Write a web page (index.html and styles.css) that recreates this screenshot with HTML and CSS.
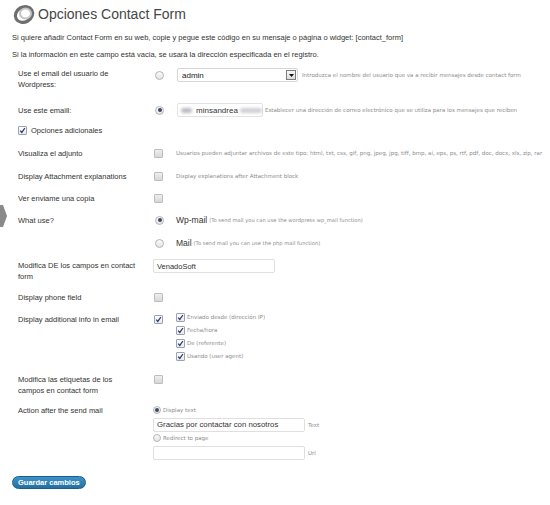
FILE: index.html
```html
<!DOCTYPE html>
<html lang="es">
<head>
<meta charset="utf-8">
<title>Opciones Contact Form</title>
<link rel="stylesheet" href="styles.css">
</head>
<body>
<svg class="menu-arrow" width="7" height="22" viewBox="0 0 7 22"><polygon points="0,0 3,0 7,11 3,22 0,22" fill="#8a8a8a"/></svg>
<div class="wrap">
  <div class="head">
    <svg class="logo" width="24" height="22" viewBox="0 0 24 22">
      <ellipse cx="12" cy="11.5" rx="9" ry="7.5" fill="none" stroke="#6e6e6e" stroke-width="3.2" transform="rotate(-30 12 11.5)"/>
      <ellipse cx="13.5" cy="10.5" rx="5.5" ry="5" fill="none" stroke="#c4c4c4" stroke-width="2"/>
      <ellipse cx="13.5" cy="10.5" rx="3" ry="2.6" fill="#fff"/>
    </svg>
    <h2 class="title">Opciones Contact Form</h2>
  </div>
  <p class="intro">Si quiere añadir Contact Form en su web, copie y pegue este código en su mensaje o página o widget: [contact_form]</p>
  <p class="intro intro2">Si la información en este campo está vacia, se usará la dirección especificada en el registro.</p>

  <div class="form">
    <div class="row mb15">
      <div class="lbl">Use el email del usuario de Wordpress:</div>
      <div class="ctl shift">
        <span class="radio"></span>
        <span class="select"><span class="sv">admin</span><span class="sbtn"><svg width="5" height="3" viewBox="0 0 5 3"><polygon points="0,0 5,0 2.5,3" fill="#111"/></svg></span></span>
        <span class="desc">Introduzca el nombre del usuario que va a recibir mensajes desde contact form</span>
      </div>
    </div>

    <div class="row mb9">
      <div class="lbl">Use este emaill:</div>
      <div class="ctl">
        <span class="radio on"></span>
        <span class="email"><span class="blur b1"></span><span class="ev">minsandrea</span><span class="blur b2"></span></span>
        <span class="desc d2">Establecer una dirección de correo electrónico que se utiliza para los mensajes que reciben</span>
      </div>
    </div>

    <div class="extra mb12">
      <span class="check on"><svg width="7" height="7" viewBox="0 0 7 7"><path d="M1.2 3.6 L2.8 5.4 L5.9 1" fill="none" stroke="#2b3f6b" stroke-width="1.3"/></svg></span>
      <span class="extra-t">Opciones adicionales</span>
    </div>

    <div class="row mb12">
      <div class="lbl">Visualiza el adjunto</div>
      <div class="ctl">
        <span class="check"></span>
        <span class="desc d3">Usuarios pueden adjuntar archivos de este tipo: html, txt, css, gif, png, jpeg, jpg, tiff, bmp, ai, eps, ps, rtf, pdf, doc, docx, xls, zip, rar</span>
      </div>
    </div>

    <div class="row mb11">
      <div class="lbl">Display Attachment explanations</div>
      <div class="ctl">
        <span class="check"></span>
        <span class="desc d3">Display explanations after Attachment block</span>
      </div>
    </div>

    <div class="row mb11">
      <div class="lbl">Ver enviame una copia</div>
      <div class="ctl">
        <span class="check"></span>
      </div>
    </div>

    <div class="row mb12">
      <div class="lbl">What use?</div>
      <div class="ctl">
        <span class="radio on"></span>
        <span class="opt">Wp-mail</span>
        <span class="desc d4">(To send mail you can use the wordpress wp_mail function)</span>
      </div>
    </div>

    <div class="row mb11">
      <div class="lbl"></div>
      <div class="ctl">
        <span class="radio"></span>
        <span class="opt">Mail</span>
        <span class="desc d4">(To send mail you can use the php mail function)</span>
      </div>
    </div>

    <div class="row mb10">
      <div class="lbl">Modifica DE los campos en contact form</div>
      <div class="ctl">
        <span class="field f1">VenadoSoft</span>
      </div>
    </div>

    <div class="row mb11">
      <div class="lbl">Display phone field</div>
      <div class="ctl">
        <span class="check"></span>
      </div>
    </div>

    <div class="row mb11">
      <div class="lbl">Display additional info in email</div>
      <div class="ctl multi">
        <span class="check on main"><svg width="7" height="7" viewBox="0 0 7 7"><path d="M1.2 3.6 L2.8 5.4 L5.9 1" fill="none" stroke="#2b3f6b" stroke-width="1.3"/></svg></span>
        <div class="subs">
          <div class="sub"><span class="check on"><svg width="7" height="7" viewBox="0 0 7 7"><path d="M1.2 3.6 L2.8 5.4 L5.9 1" fill="none" stroke="#2b3f6b" stroke-width="1.3"/></svg></span><span class="desc">Enviado desde (dirección IP)</span></div>
          <div class="sub"><span class="check on"><svg width="7" height="7" viewBox="0 0 7 7"><path d="M1.2 3.6 L2.8 5.4 L5.9 1" fill="none" stroke="#2b3f6b" stroke-width="1.3"/></svg></span><span class="desc">Fecha/hora</span></div>
          <div class="sub"><span class="check on"><svg width="7" height="7" viewBox="0 0 7 7"><path d="M1.2 3.6 L2.8 5.4 L5.9 1" fill="none" stroke="#2b3f6b" stroke-width="1.3"/></svg></span><span class="desc">De (referente)</span></div>
          <div class="sub"><span class="check on"><svg width="7" height="7" viewBox="0 0 7 7"><path d="M1.2 3.6 L2.8 5.4 L5.9 1" fill="none" stroke="#2b3f6b" stroke-width="1.3"/></svg></span><span class="desc">Usando (user agent)</span></div>
        </div>
      </div>
    </div>

    <div class="row mb9">
      <div class="lbl">Modifica las etiquetas de los campos en contact form</div>
      <div class="ctl">
        <span class="check"></span>
      </div>
    </div>

    <div class="row">
      <div class="lbl">Action after the send mail</div>
      <div class="ctl stack">
        <div class="line"><span class="radio sm on"></span><span class="desc">Display text</span></div>
        <div class="line in"><span class="field f2">Gracias por contactar con nosotros</span><span class="desc">Text</span></div>
        <div class="line"><span class="radio sm"></span><span class="desc">Redirect to page</span></div>
        <div class="line in"><span class="field f2"></span><span class="desc">Url</span></div>
      </div>
    </div>
  </div>

  <button class="save">Guardar cambios</button>
</div>
</body>
</html>
```

FILE: styles.css
```css
html, body {
  margin: 0;
  padding: 0;
  overflow: hidden;
  background: #fff;
}
body {
  font-family: "Liberation Sans", Arial, sans-serif;
  color: #333;
  font-size: 7.5px;
  position: relative;
  width: 550px;
  height: 505px;
}
.menu-arrow {
  position: absolute;
  left: 0;
  top: 205px;
}
.wrap {
  padding-left: 12px;
}
.head {
  display: flex;
  align-items: center;
  height: 26px;
  padding-top: 1px;
}
.logo {
  margin-right: 2px;
}
.title {
  margin: 0;
  font-weight: normal;
  font-size: 14px;
  color: #464646;
  line-height: 20px;
}
.intro {
  margin: 4.5px 0 0;
  line-height: 11px;
  font-size: 7.5px;
  color: #333;
  white-space: nowrap;
}
.intro2 {
  margin-top: 6px;
}
.form {
  margin-top: 8px;
  margin-left: 6px;
}
.row {
  display: grid;
  grid-template-columns: 135px 1fr;
  margin-bottom: 12px;
}
.mb15 { margin-bottom: 15px; }
.mb12 { margin-bottom: 12px; }
.mb11 { margin-bottom: 11px; }
.mb10 { margin-bottom: 10px; }
.mb9 { margin-bottom: 9px; }
.lbl {
  width: 119px;
  line-height: 11px;
  font-size: 7.5px;
  color: #333;
}
.ctl {
  display: flex;
  align-items: center;
  height: 11px;
  white-space: nowrap;
}
.ctl.shift {
  margin-top: 2px;
}
.radio {
  flex: none;
  width: 7px;
  height: 7px;
  border: 1px solid #b5b5b5;
  border-radius: 50%;
  background: linear-gradient(#fafafa, #e4e4e4);
  margin-left: 2px;
  position: relative;
  box-sizing: content-box;
}
.radio.on::after {
  content: "";
  position: absolute;
  left: 1.5px;
  top: 1.5px;
  width: 4px;
  height: 4px;
  border-radius: 50%;
  background: #3b4a66;
}
.radio.sm {
  width: 6px;
  height: 6px;
  margin-left: 0;
}
.radio.sm.on::after {
  left: 1px;
  top: 1px;
}
.check {
  flex: none;
  width: 7px;
  height: 7px;
  border: 1px solid #bdbdbd;
  border-radius: 1px;
  background: linear-gradient(#efefef, #d6d6d6);
  margin-left: 1px;
  display: flex;
}
.check.on {
  background: linear-gradient(#ffffff, #e9e9e9);
  border-color: #9aa3b5;
}
.check svg {
  display: block;
}
.select {
  flex: none;
  margin-left: 13px;
  width: 121px;
  height: 14px;
  box-sizing: border-box;
  border: 1px solid #d6d6d6;
  border-radius: 2px;
  display: flex;
  align-items: center;
  justify-content: space-between;
  padding-left: 4px;
  padding-right: 1px;
  background: #fff;
}
.sv {
  font-size: 8px;
  color: #222;
}
.sbtn {
  width: 10px;
  height: 10px;
  box-sizing: border-box;
  border: 1px solid #7d7d7d;
  background: linear-gradient(#f7f7f7, #dcdcdc);
  display: flex;
  align-items: center;
  justify-content: center;
}
.sbtn svg { display: block; }
.desc {
  font-family: "DejaVu Sans", Verdana, sans-serif;
  font-size: 5.5px;
  color: #8c8c8c;
  margin-left: 4px;
}
.d2 { margin-left: 2px; }
.d3 { margin-left: 13px; }
.d4 { margin-left: 2px; font-size: 5.2px; }
.email {
  flex: none;
  margin-left: 13px;
  width: 86px;
  height: 14px;
  box-sizing: border-box;
  border: 1px solid #e2e2e2;
  border-radius: 2px;
  display: flex;
  align-items: center;
  padding-left: 3px;
  background: #fff;
}
.blur {
  display: block;
  height: 5px;
  background: #b9b9c4;
  filter: blur(1.6px);
  border-radius: 3px;
}
.b1 { width: 12px; margin-right: 4px; }
.b2 { width: 24px; margin-left: 2px; background: #cfcfd6; }
.ev {
  font-size: 8px;
  color: #333;
}
.opt {
  font-size: 8.5px;
  color: #333;
  margin-left: 12px;
}
.extra {
  display: flex;
  align-items: center;
  height: 11px;
}
.extra .check {
  margin-left: 0;
}
.extra-t {
  margin-left: 4px;
  font-size: 7.5px;
  color: #333;
}
.field {
  flex: none;
  height: 14px;
  box-sizing: border-box;
  border: 1px solid #dfdfdf;
  border-radius: 2px;
  display: flex;
  align-items: center;
  padding-left: 3px;
  background: #fff;
  font-size: 7.5px;
  color: #333;
}
.f1 {
  width: 122px;
  margin-top: 2px;
}
.f2 {
  width: 152px;
  font-size: 7.8px;
}
.multi {
  align-items: flex-start;
  height: auto;
}
.check.main {
  margin-top: 1px;
}
.subs {
  margin-left: 13px;
  margin-top: -3px;
}
.sub {
  display: flex;
  align-items: center;
  height: 13px;
}
.sub .check { margin-left: 0; }
.sub .desc { margin-left: 2px; }
.stack {
  flex-direction: column;
  align-items: flex-start;
  height: auto;
}
.line {
  display: flex;
  align-items: center;
  height: 10px;
}
.line .desc { margin-left: 2px; }
.line.in {
  height: 14px;
  margin-top: 3px;
}
.line.in + .line {
  margin-top: 1px;
}
.line.in .desc {
  margin-left: 3px;
}
.save {
  display: block;
  margin-top: 16.5px;
  height: 13px;
  padding: 0 5px;
  border: 1px solid #1c5f8c;
  border-radius: 7px;
  background: linear-gradient(#3d93c9, #24709f);
  color: #fff;
  font-family: "Liberation Sans", Arial, sans-serif;
  font-weight: bold;
  font-size: 7.5px;
  line-height: 11px;
}
```
